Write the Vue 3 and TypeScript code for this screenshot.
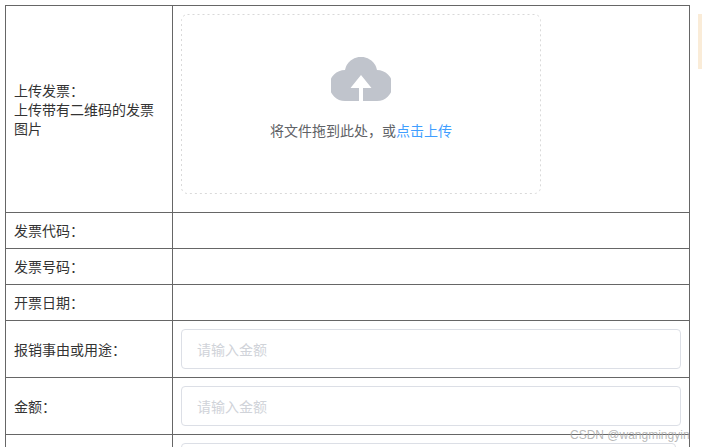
<template>
  <div class="page">
    <table class="invoice-table">
      <colgroup>
        <col class="label-col" />
        <col />
      </colgroup>
      <tbody>
        <tr>
          <td class="label">上传发票：<br />上传带有二维码的发票图片</td>
          <td class="upload-cell">
            <div class="dragger">
              <svg class="dash-frame" width="360" height="180">
                <rect x="0.5" y="0.5" width="359" height="179" rx="6" />
              </svg>
              <svg class="cloud" viewBox="0 0 60 44" width="60" height="44">
                <path
                  fill="#c0c4cc"
                  d="M14 44A15 15 0 0 1 14 13A16.300 16.300 0 0 1 46 13A15 15 0 0 1 46 44Z"
                />
                <path fill="#fff" d="M30 18L40.500 31H32V44H28V31H19.500Z" />
              </svg>
              <div class="hint">将文件拖到此处，或<em>点击上传</em></div>
            </div>
          </td>
        </tr>
        <tr v-for="name in emptyRows" :key="name" class="plain-row">
          <td class="label">{{ name }}：</td>
          <td></td>
        </tr>
        <tr v-for="name in inputRows" :key="name">
          <td class="label">{{ name }}：</td>
          <td><input class="text-input" type="text" placeholder="请输入金额" /></td>
        </tr>
        <tr>
          <td class="label"></td>
          <td><input class="text-input short" type="text" placeholder="请输入金额" /></td>
        </tr>
      </tbody>
    </table>
    <aside class="side-note"></aside>
    <div class="watermark">CSDN @wangmingyin</div>
  </div>
</template>

<script setup lang="ts">
const emptyRows: string[] = ['发票代码', '发票号码', '开票日期'];
const inputRows: string[] = ['报销事由或用途', '金额'];
</script>

<style>
html,
body {
  margin: 0;
  height: 100%;
  overflow: hidden;
  background: #fff;
}
</style>

<style scoped>
.page {
  position: relative;
  display: flex;
  align-items: flex-start;
  width: 702px;
  height: 447px;
  padding: 5px 0 0 5px;
  box-sizing: border-box;
  overflow: hidden;
  font-family: "Liberation Sans", "Noto Sans CJK SC", sans-serif;
  font-size: 14px;
  line-height: 19px;
  color: #333;
}

.invoice-table {
  flex: none;
  width: 685px;
  table-layout: fixed;
  border-collapse: collapse;
}

.label-col {
  width: 167px;
}

.invoice-table td {
  padding: 8px;
  border: 1px solid #666;
  vertical-align: middle;
}

.invoice-table td.label {
  padding-top: 9px;
  padding-bottom: 7px;
}

.plain-row td {
  height: 19px;
}

.dragger {
  position: relative;
  display: flex;
  flex-direction: column;
  align-items: center;
  width: 360px;
  height: 180px;
  margin-bottom: 10px;
}

.dash-frame {
  position: absolute;
  top: 0;
  left: 0;
}

.dash-frame rect {
  fill: none;
  stroke: #d9d9d9;
  stroke-dasharray: 2 3;
}

.cloud {
  margin-top: 43px;
}

.hint {
  margin-top: 21px;
  color: #606266;
}

.hint em {
  font-style: normal;
  color: #409eff;
}

.text-input {
  display: block;
  width: 100%;
  height: 40px;
  padding: 2px 15px 0;
  box-sizing: border-box;
  border: 1px solid #dcdfe6;
  border-radius: 4px;
  outline: none;
  font: inherit;
  color: #606266;
}

.text-input.short {
  width: 495px;
}

.text-input::placeholder {
  color: #d0d3d9;
}

.side-note {
  flex: none;
  width: 60px;
  height: 55px;
  margin: 9px 0 0 8px;
  background: #faecd8;
}

.watermark {
  position: absolute;
  top: 427px;
  left: 570px;
  font-size: 12px;
  line-height: 16px;
  color: rgba(170, 170, 170, 0.85);
}
</style>
